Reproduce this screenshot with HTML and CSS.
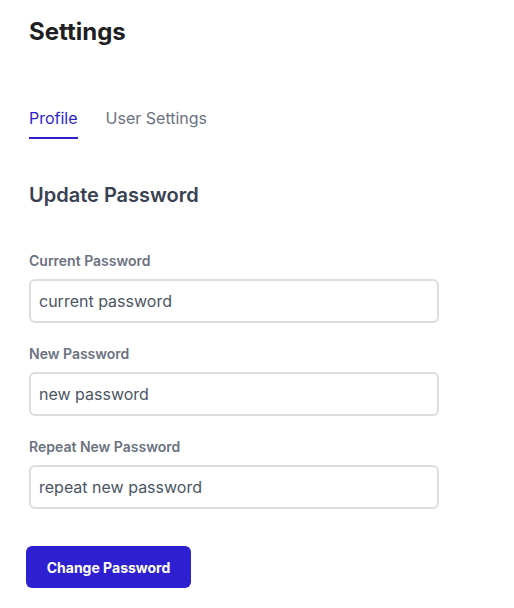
FILE: index.html
```html
<!DOCTYPE html>
<html lang="en">
<head>
<meta charset="utf-8">
<title>Settings</title>
<link rel="stylesheet" href="styles.css">
</head>
<body>
<main class="page">
  <h1 class="title">Settings</h1>
  <nav class="tabs">
    <a class="tab tab-active">Profile</a>
    <a class="tab">User Settings</a>
  </nav>
  <h2 class="section-title">Update Password</h2>
  <form class="form">
    <div class="field">
      <label class="label">Current Password</label>
      <input class="input" type="text" value="current password">
    </div>
    <div class="field">
      <label class="label">New Password</label>
      <input class="input" type="text" value="new password">
    </div>
    <div class="field">
      <label class="label">Repeat New Password</label>
      <input class="input" type="text" value="repeat new password">
    </div>
    <button class="button" type="button">Change Password</button>
  </form>
</main>
</body>
</html>
```
FILE: styles.css
```css
* { box-sizing: border-box; }
html, body { margin: 0; padding: 0; background: #ffffff; }
body { font-family: Inter, "Noto Sans", sans-serif; color: #111827; }
.page { padding: 16px 0 0 29px; width: 439px; }
.title { margin: 0; font-size: 24px; line-height: 32px; font-weight: 700; color: #1f1f23; }
.tabs { display: flex; gap: 28px; margin-top: 58px; }
.tab { font-size: 16px; line-height: 24px; color: #6b7280; padding-bottom: 7px; border-bottom: 2px solid transparent; }
.tab-active { color: #2e1fd0; border-bottom-color: #2e1fd0; }
.section-title { margin: 42px 0 0; font-size: 20px; line-height: 28px; font-weight: 600; color: #374151; }
.form { display: flex; flex-direction: column; gap: 21px; margin-top: 42px; }
.field { display: flex; flex-direction: column; gap: 8px; }
.label { font-size: 14px; line-height: 20px; font-weight: 600; color: #6b7280; }
.input { width: 410px; height: 44px; border: 2px solid #dcdde1; border-radius: 6px; padding: 0 8px; font-family: Inter, "Noto Sans", sans-serif; font-size: 16px; color: #4b5563; background: #fff; outline: none; }
.button { align-self: flex-start; margin: 16px 0 0 -3px; width: 165px; height: 42px; border: none; border-radius: 6px; background: #2e1fd1; color: #ffffff; font-family: Inter, "Noto Sans", sans-serif; font-size: 14px; font-weight: 700; }
```
